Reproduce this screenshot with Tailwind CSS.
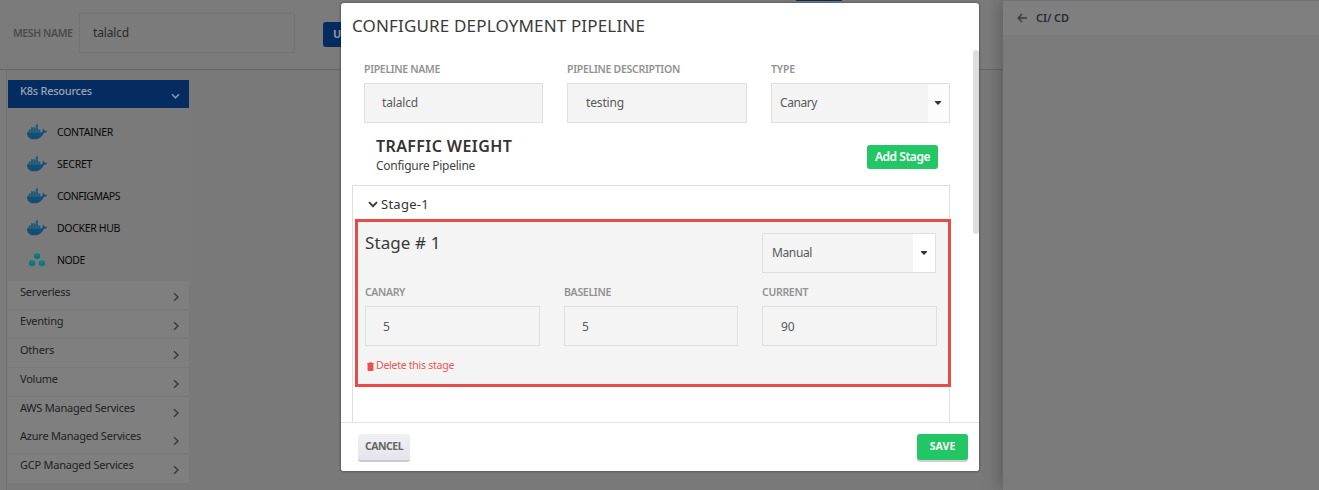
<!DOCTYPE html>
<html lang="en">
<head>
<meta charset="utf-8">
<title>Configure Deployment Pipeline</title>
<script src="https://cdn.jsdelivr.net/npm/@tailwindcss/browser@4"></script>
</head>
<body class="relative w-[1319px] h-[490px] overflow-hidden bg-[#797979] font-['Noto_Sans',sans-serif] text-[12px] leading-4 text-[#444] whitespace-nowrap">
<svg class="hidden">
  <symbol id="whale" viewBox="0 0 20 16">
    <path fill="#124f78" d="M0 8.2H15.2C16 7.2 15.4 5.8 16 4.6C16.9 5.1 17.2 5.9 17.2 6.6C18.2 6.4 19.3 6.6 20 7.2C19.4 8.4 18.2 8.8 16.9 8.7C15.2 13 11.6 15.3 7.2 15.3C2.6 15.3 0 12.8 0 8.2Z"/>
    <path fill="#1f5a7c" d="M1.6 5.6H3.7V8H1.6ZM4 5.6H6.1V8H4ZM6.4 5.6H8.5V8H6.4ZM8.8 5.6H10.9V8H8.8ZM11.2 5.6H13.3V8H11.2ZM4 3.2H6.1V5.4H4ZM6.4 3.2H8.5V5.4H6.4ZM8.8 3.2H10.9V5.4H8.8ZM8.8 .6H10.9V3H8.8Z"/>
  </symbol>
  <symbol id="right" viewBox="0 0 8 10"><path d="M2 1.2L6 5L2 8.8" fill="none" stroke="#393939" stroke-width="1.4"/></symbol>
</svg>

<div class="flex h-full">
  <main class="w-[1003px] h-full">
    <header class="h-[70px] border-b border-[#666] bg-[#7b7b7b] flex items-start pl-[13px] relative">
      <div class="absolute left-[796px] top-0 w-[46px] h-px bg-[#052c61]"></div>
      <span class="mt-[25px] w-[66px] text-[10.5px] font-semibold text-[#4b4b4b] tracking-[-0.4px]">MESH NAME</span>
      <div class="mt-[13px] w-[216px] h-10 border border-[#727272] pl-[13px] pt-[11px] text-[#2c2c2c] tracking-[-0.16px]">talalcd</div>
      <div class="mt-[22px] ml-7 w-[60px] h-[25px] rounded-[3px] bg-[#052c61] pl-[10px] pt-[4px] text-[11px] font-bold text-[#8f98a6]">U</div>
    </header>
    <div class="flex h-[420px]">
      <div class="w-[7px] border-r border-[#707070] bg-[#7b7b7b]"></div>
      <aside class="ml-px mt-[10px] w-[181px]">
        <div class="h-7 bg-[#052c61] flex justify-between pl-3 pr-[9px] text-[11px] text-[#9ba5b3] font-medium tracking-[-0.25px]"><span class="mt-[3px]">K8s Resources</span>
          <svg class="mt-[13px] w-[9px] h-[7px]" viewBox="0 0 9 7"><path d="M1 1.3L4.5 4.8L8 1.3" fill="none" stroke="#8493ab" stroke-width="1.6"/></svg></div>
        <div class="h-[173px] pt-2 pl-[19px] bg-[#7a7a7a] text-[10.5px] text-[#080808]">
          <div class="h-8 flex items-center gap-[10px]"><svg class="w-5 h-4"><use href="#whale"/></svg><span class="tracking-[-0.26px]">CONTAINER</span></div>
          <div class="h-8 flex items-center gap-[10px]"><svg class="w-5 h-4"><use href="#whale"/></svg><span class="tracking-[-0.2px]">SECRET</span></div>
          <div class="h-8 flex items-center gap-[10px]"><svg class="w-5 h-4"><use href="#whale"/></svg><span class="tracking-[-0.46px]">CONFIGMAPS</span></div>
          <div class="h-8 flex items-center gap-[10px]"><svg class="w-5 h-4"><use href="#whale"/></svg><span class="tracking-[-0.33px]">DOCKER HUB</span></div>
          <div class="h-8 flex items-center gap-[10px]"><svg class="w-5 h-4" viewBox="0 0 20 16"><g fill="#097780"><path d="M10 .8L13 2.4V5.7L10 7.3L7 5.7V2.4ZM5 8L8 9.6V12.9L5 14.5L2 12.9V9.6ZM15 8L18 9.6V12.9L15 14.5L12 12.9V9.6Z"/></g><path d="M10 .8L13 2.4L10 4L7 2.4ZM5 8L8 9.6L5 11.2L2 9.6ZM15 8L18 9.6L15 11.2L12 9.6Z" fill="#158089"/></svg><span class="tracking-[-0.42px]">NODE</span></div>
        </div>
        <div class="text-[11px] text-[#222] tracking-[-0.23px]">
          <div class="h-[29px] border-b border-[#777] bg-[#7f7f7f] flex justify-between pl-3 pr-[9px]"><span class="mt-[3px]">Serverless</span><svg class="mt-[11px] w-2 h-[10px]"><use href="#right"/></svg></div>
          <div class="h-[29px] border-b border-[#777] bg-[#7f7f7f] flex justify-between pl-3 pr-[9px]"><span class="mt-[3px]">Eventing</span><svg class="mt-[11px] w-2 h-[10px]"><use href="#right"/></svg></div>
          <div class="h-[29px] border-b border-[#777] bg-[#7f7f7f] flex justify-between pl-3 pr-[9px]"><span class="mt-[3px]">Others</span><svg class="mt-[11px] w-2 h-[10px]"><use href="#right"/></svg></div>
          <div class="h-[29px] border-b border-[#777] bg-[#7f7f7f] flex justify-between pl-3 pr-[9px]"><span class="mt-[3px]">Volume</span><svg class="mt-[11px] w-2 h-[10px]"><use href="#right"/></svg></div>
          <div class="h-[28px] bg-[#7f7f7f] flex justify-between pl-3 pr-[9px]"><span class="mt-[3px]">AWS Managed Services</span><svg class="mt-[11px] w-2 h-[10px]"><use href="#right"/></svg></div>
          <div class="h-[29px] border-b border-[#777] bg-[#7f7f7f] flex justify-between pl-3 pr-[9px]"><span class="mt-[3px]">Azure Managed Services</span><svg class="mt-[11px] w-2 h-[10px]"><use href="#right"/></svg></div>
          <div class="h-[29px] bg-[#7f7f7f] flex justify-between pl-3 pr-[9px]"><span class="mt-[3px]">GCP Managed Services</span><svg class="mt-[11px] w-2 h-[10px]"><use href="#right"/></svg></div>
        </div>
      </aside>
    </div>
  </main>
  <aside class="relative w-[316px] h-full bg-[#7b7b7b] shadow-[-3px_0_16px_rgba(0,0,0,0.25)]">
    <div class="h-[35px] border-t border-[#727272] bg-[#7f7f7f] flex items-center pl-[14px] gap-[9px] text-[11px] font-semibold text-[#292b37]">
      <svg class="w-[10px] h-[10px]" viewBox="0 0 10 10"><path d="M10 5H1.5M5 1L1.2 5L5 9" fill="none" stroke="#3d3d3d" stroke-width="1.5"/></svg>
      <span class="tracking-[-0.07px]">CI/ CD</span>
    </div>
  </aside>
</div>

<section class="absolute left-[341px] top-[3px] w-[638px] h-[468px] rounded-[3px] bg-white shadow-[0_0_3px_rgba(0,0,0,0.5)] overflow-hidden flex flex-col">
  <h1 class="h-[46px] pl-[11px] pt-[11px] text-[17px] leading-6 text-[#3a3a3a] tracking-[0.16px]">CONFIGURE DEPLOYMENT PIPELINE</h1>
  <div class="h-[373px] overflow-hidden relative">
    <div class="absolute right-0 top-px w-[6px] h-[184px] rounded-[3px] bg-[#dedede]"></div>
    <div class="grid grid-cols-[179px_180px_179px] gap-6 pl-[23px] pt-3">
      <div><div class="h-[22px] text-[10.5px] font-semibold text-[#929292] tracking-[-0.32px]">PIPELINE NAME</div>
        <div class="h-10 border border-[#dfdfdf] bg-[#f4f4f4] pl-[17px] pt-[11px] text-[#58595b] tracking-[-0.16px]">talalcd</div></div>
      <div><div class="h-[22px] text-[10.5px] font-semibold text-[#929292] tracking-[-0.29px]">PIPELINE DESCRIPTION</div>
        <div class="h-10 border border-[#dfdfdf] bg-[#f4f4f4] pl-[18px] pt-[11px] text-[#58595b] tracking-[-0.15px]">testing</div></div>
      <div><div class="h-[22px] text-[10.5px] font-semibold text-[#929292] tracking-[-0.15px]">TYPE</div>
        <div class="h-10 border border-[#dfdfdf] bg-[#f4f4f4] flex justify-between pl-[8px] text-[#58595b]"><span class="mt-[11px] tracking-[-0.42px]">Canary</span>
          <div class="w-[21px] bg-[#fcfcfc] flex items-center justify-center pr-px"><svg class="w-[6px] h-[4px]" viewBox="0 0 6 4"><path d="M0 0H6V1L3 4L0 1Z" fill="#333"/></svg></div></div></div>
    </div>
    <div class="h-[62px] flex justify-between pl-[35px] pr-[41px]">
      <div class="pt-[12px]"><div class="text-[16px] leading-[22px] font-semibold text-[#333] tracking-[0.4px]">TRAFFIC WEIGHT</div><div class="text-[#444] tracking-[-0.26px] mt-px">Configure Pipeline</div></div>
      <div class="mt-[22px] w-[71px] h-6 rounded-[3px] bg-[#22c665] text-white font-semibold flex items-center justify-center tracking-[-0.47px]">Add Stage</div>
    </div>
    <div class="ml-[11px] w-[598px] h-[300px] border border-[#dedede]">
      <div class="h-[33px] flex items-center pt-[3px] pl-[15px] gap-[3px] text-[13px] text-[#333]"><svg class="w-[10px] h-[7px]" viewBox="0 0 10 7"><path d="M1 1.2L5 5.2L9 1.2" fill="none" stroke="#333" stroke-width="1.8"/></svg><span class="tracking-[0.27px]">Stage-1</span></div>
      <div class="ml-[2px] w-[596px] h-[168px] border-[3px] border-[#eb4b46] bg-[#f4f4f4] relative">
        <div class="flex justify-between pl-[7px] pr-[12px] pt-[11px]">
          <h2 class="text-[17px] leading-6 mt-[-2px] text-[#3a3a3a] tracking-[0.1px]">Stage # 1</h2>
          <div class="w-[174px] h-10 border border-[#dfdfdf] flex justify-between pl-[9px] text-[#58595b]"><span class="mt-[11px] tracking-[-0.38px]">Manual</span>
          <div class="w-[22px] bg-white flex items-center justify-center"><svg class="w-[6px] h-[4px]" viewBox="0 0 6 4"><path d="M0 0H6V1L3 4L0 1Z" fill="#333"/></svg></div></div>
        </div>
        <div class="grid grid-cols-[175px_174px_175px] gap-6 pl-[7px] pt-[11px]">
          <div><div class="h-[22px] text-[10.5px] font-semibold text-[#929292] tracking-[-0.36px]">CANARY</div><div class="h-10 border border-[#dfdfdf] pl-[17px] pt-[12px] text-[#58595b]">5</div></div>
          <div><div class="h-[22px] text-[10.5px] font-semibold text-[#929292] tracking-[-0.3px]">BASELINE</div><div class="h-10 border border-[#dfdfdf] pl-[17px] pt-[12px] text-[#58595b]">5</div></div>
          <div><div class="h-[22px] text-[10.5px] font-semibold text-[#929292] tracking-[-0.3px]">CURRENT</div><div class="h-10 border border-[#dfdfdf] pl-[18px] pt-[12px] text-[#58595b]">90</div></div>
        </div>
        <div class="flex items-center pl-[9px] pt-[11px] gap-[2px] text-[10.5px] text-[#ee5553]"><svg class="mt-[3px] w-[7px] h-[9px]" viewBox="0 0 7 9"><path d="M.2 1H2L2.5 .2H4.5L5 1H6.8V2.3H6.4V8.2Q6.3 9 5.5 9H1.5Q.7 9 .6 8.2V2.3H.2Z" fill="#ee4e4c"/></svg><span class="tracking-[-0.26px]">Delete this stage</span></div>
      </div>
    </div>
  </div>
  <footer class="h-[49px] border-t border-[#e4e4e4] bg-white flex justify-between pl-[17px] pr-[11px] pt-[11px] text-[10.5px] font-bold">
    <div class="w-[52px] h-[28px] rounded-[3px] border-b-2 border-[#cbcad2] bg-linear-to-b from-[#f1f0f4] to-[#e5e4ec] text-[#666] flex items-center justify-center pb-[2px] tracking-[-0.5px]">CANCEL</div>
    <div class="w-[51px] h-[26px] rounded-[3px] bg-[#22c665] shadow-[0_2px_0_#ccd0ce] text-white flex items-center justify-center pb-[2px] tracking-[0.1px]">SAVE</div>
  </footer>
</section>
</body>
</html>
